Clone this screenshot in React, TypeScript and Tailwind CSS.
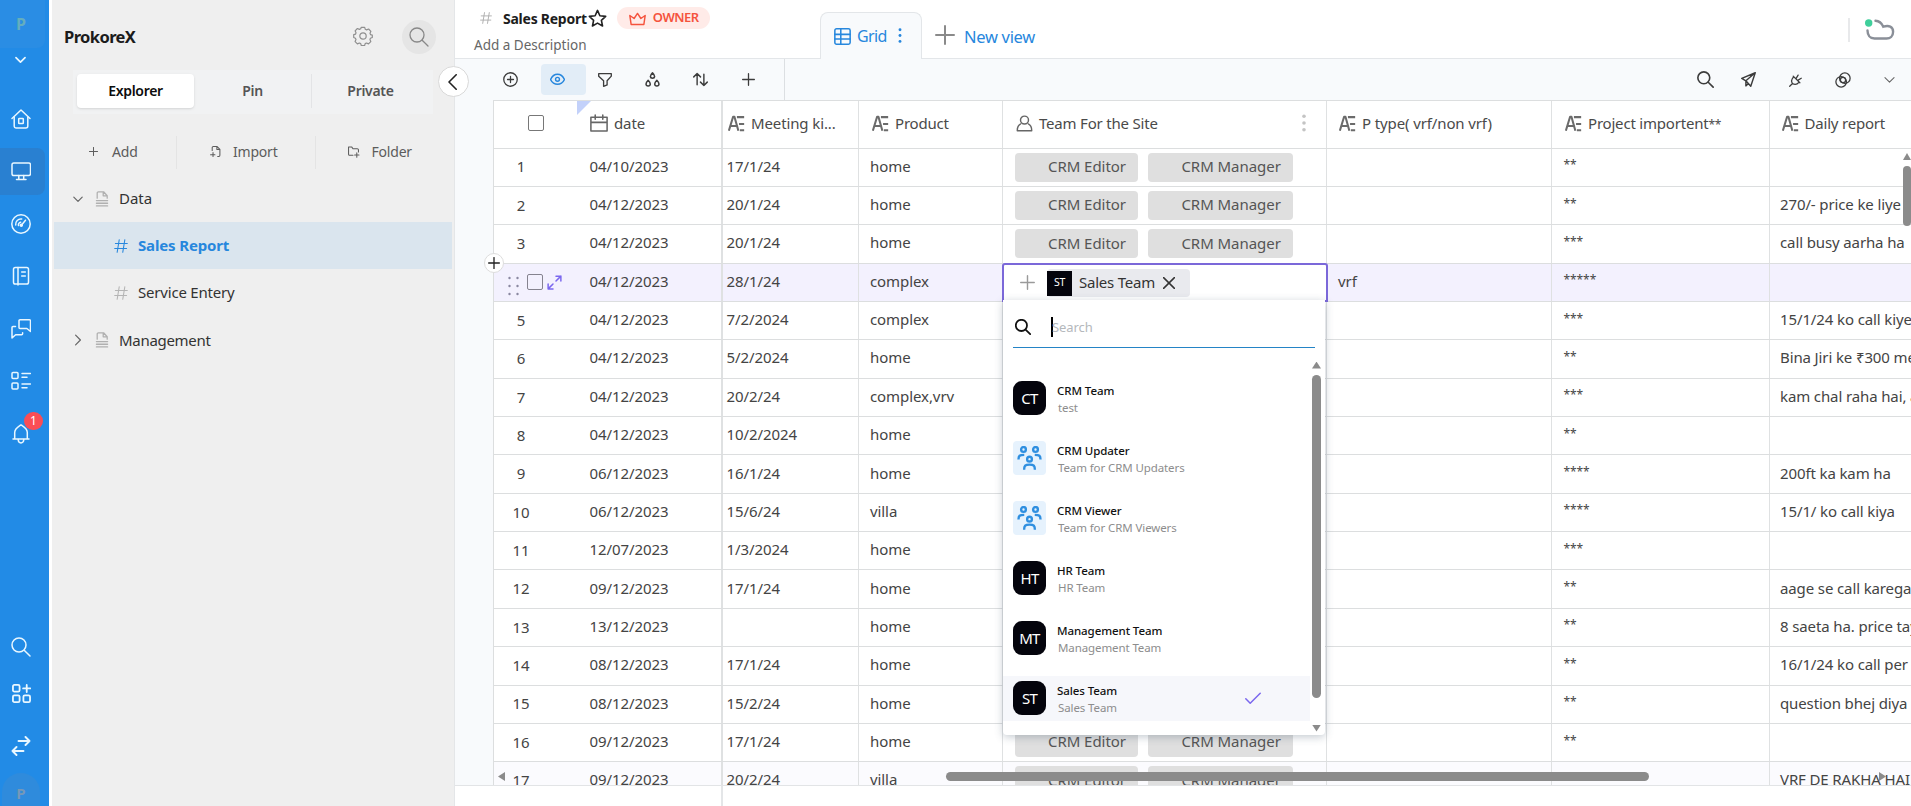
import { useState, type ReactNode } from "react";
import clsx from "clsx";

type IconProps = {
  size?: number;
  stroke?: number;
  className?: string;
  children: ReactNode;
};

// All line icons share a 20x20 view box
function Icon({ size = 20, stroke = 1.5, className, children }: IconProps) {
  return (
    <svg
      width={size}
      height={size}
      viewBox="0 0 20 20"
      fill="none"
      stroke="currentColor"
      strokeWidth={stroke}
      strokeLinecap="round"
      strokeLinejoin="round"
      className={clsx("shrink-0", className)}
    >
      {children}
    </svg>
  );
}

const searchPath = (
  <>
    <circle cx="8" cy="8" r="7" />
    <path d="M13.2 13.2 19 19" />
  </>
);
const chevronDown = <path d="m3 7 7 7 7-7" />;
const plusPath = <path d="M10 1v18M1 10h18" />;

const railItems: { id: string; icon: ReactNode; active?: boolean; badge?: number }[] = [
  {
    id: "home",
    icon: (
      <>
        <path d="M1 9.500 10 1l9 8.500" />
        <path d="M3.200 8v9a2 2 0 0 0 2 2h9.600a2 2 0 0 0 2-2V8" />
        <rect x="7.700" y="9.500" width="4.600" height="5" rx=".6" />
      </>
    ),
  },
  {
    id: "workspace",
    active: true,
    icon: (
      <>
        <rect x="1" y="2" width="18.500" height="12.500" rx="1.800" />
        <path d="M7.800 14.500v3.500M12.700 14.500v3.500M5.500 18.500h9.500" />
      </>
    ),
  },
  {
    id: "dashboard",
    icon: (
      <>
        <circle cx="10" cy="10" r="9.200" />
        <path d="M4.700 11a5.300 5.300 0 0 1 6-6" />
        <path d="M7.500 11.500a2.600 2.600 0 0 1 2.200-3.300M11 10.500 14.500 6.200" />
        <circle cx="10.300" cy="11.300" r="1" fill="currentColor" />
      </>
    ),
  },
  {
    id: "notebook",
    icon: (
      <>
        <rect x="2.500" y="1.500" width="15" height="16.500" rx="1.800" />
        <path d="M7 1.500V19M10.700 6h3.600M10.700 10h3.600" />
      </>
    ),
  },
  {
    id: "chat",
    icon: (
      <>
        <path d="M8 5.500V1.800A1 1 0 0 1 9 .8h9.500a1 1 0 0 1 1 1V12.500l-3.600-3H9a1 1 0 0 1-1-1z" />
        <path d="M4.500 7.500H2a1 1 0 0 0-1 1V19l3.600-3.200h6a1 1 0 0 0 1-1v-1" />
      </>
    ),
  },
  {
    id: "forms",
    icon: (
      <>
        <rect x="1" y="1.500" width="6" height="6" rx="1" />
        <rect x="1" y="12" width="6" height="6" rx="1" />
        <path d="M11 2.500h8.500M11 6.300h5M11 13h8.500M11 16.800h5" />
      </>
    ),
  },
  {
    id: "alerts",
    badge: 1,
    icon: (
      <>
        <path d="M2 15h16M3.700 15V8.500C3.700 4.500 7.500 2.500 10 .8c2.500 1.700 6.300 3.700 6.300 7.700V15" />
        <path d="M7.200 15.500c0 4.500 5.600 4.500 5.600 0" />
      </>
    ),
  },
];

function Rail() {
  return (
    <nav className="flex w-[49px] shrink-0 flex-col bg-[#228be6] text-[#e9f7ff]">
      <div className="flex h-12 w-[45px] items-center justify-center rounded-br-lg bg-[#2a8de4] pr-[3px] text-[16px] font-bold text-[#64aebd]">
        P
      </div>
      <div className="flex h-[45px] w-[41px] justify-center pt-[5px]">
        <Icon size={13} stroke={2.6}>{chevronDown}</Icon>
      </div>
      {railItems.map((item) => (
        <div key={item.id} className="flex h-[52.500px] w-[45px] shrink-0 items-center pb-px">
          <div
            className={clsx(
              "relative flex h-[47px] w-[45px] items-center justify-center rounded-r-lg pr-[3px]",
              item.active && "bg-[#2980d1]"
            )}
          >
            <Icon>{item.icon}</Icon>
            {item.badge && (
              <span className="absolute left-[24px] top-[2px] flex h-[18px] w-[19px] items-center justify-center rounded-full bg-[#fa4d56] text-[12px] leading-none text-white">
                {item.badge}
              </span>
            )}
          </div>
        </div>
      ))}
      <div className="mt-auto flex w-[42px] flex-col items-center">
        <Icon>{searchPath}</Icon>
        <Icon className="mt-[27px]" size={19} stroke={1.900}>
          <rect x="1" y="1" width="7" height="7" rx="1.500" />
          <rect x="1" y="12" width="7" height="7" rx="1.500" />
          <rect x="12" y="12" width="7" height="7" rx="1.500" />
          <path d="M15.500 1v7.500M11.700 4.700h7.600" />
        </Icon>
        <Icon className="mt-[33px]" size={20} stroke={1.900}>
          <path d="M7.500 5H18.500M14.500 1l4 4-4 4M12.500 15H1.500M5.500 11l-4 4 4 4" />
        </Icon>
        <div className="mt-[17px] flex h-[33px] w-[38px] items-center justify-center rounded-t-full bg-[#2f8bdc] pt-[8px] text-[15px] font-bold text-[#7498b8]">
          P
        </div>
      </div>
    </nav>
  );
}

const docIcon = (
  <Icon size={16} stroke={1.600} className="text-[#b0b0b0]">
    <path d="M4 9V2.500A1.500 1.500 0 0 1 5.500 1H12l4.500 5v3M11.500 1.500V6h4.500M3 12h14M3 15.300h14M3 18.600h14" />
  </Icon>
);

function HashMark({ className }: { className?: string }) {
  return (
    <Icon size={14} stroke={1.500} className={className}>
      <path d="M7.500 1 4.500 19M15.500 1l-3 18M2 6.500h17M1 13.500h17" />
    </Icon>
  );
}

function Sidebar() {
  const [tab, setTab] = useState("Explorer");

  return (
    <aside className="ml-[3px] flex w-[403px] shrink-0 flex-col border-r border-[#e4e6e8] bg-[#efefef]">
      <div className="flex h-[70px] items-center pl-3 pr-[18px] pt-[4px]">
        <h1 className="text-[16.500px] font-bold tracking-[-0.600px] text-[#1b1b1b]">ProkoreX</h1>
        <Icon size={20} stroke={1.200} className="-mt-[2px] ml-auto text-[#8f8f8f]">
          <circle cx="10" cy="10" r="3.200" />
          <path d="M8.300 1.300h3.400l.6 2 1.300.6 2-.9 2.300 2.300-.9 2 .6 1.400 1.700.5v2.300l-1.900.8-.5 1.300.9 2-2.300 2.300-2-.9-1.300.6-.6 1.900H8.300l-.6-1.900-1.300-.6-2 .9-2.300-2.300.9-2-.6-1.300-1.700-.8V8.700l1.800-.5.500-1.400-.9-2 2.300-2.300 2 .9 1.300-.6z" />
        </Icon>
        <div className="ml-[29px] flex size-[34px] items-center justify-center rounded-full bg-[#e5e5e5]">
          <Icon size={20} stroke={1.300} className="text-[#888]">{searchPath}</Icon>
        </div>
      </div>

      <div className="ml-[21px] mr-[21px] flex h-[44px] bg-[#f1f2f3] p-[4px] pb-[6px] text-[14px] font-semibold text-[#555]">
        {["Explorer", "Pin", "Private"].map((name) => (
          <button
            key={name}
            onClick={() => setTab(name)}
            className={clsx(
              "h-[34px] flex-1 rounded pb-px tracking-[-0.300px]",
              tab === name && "bg-white text-[#0c0c0c] shadow-sm",
              name === "Private" && "rounded-none border-l border-[#e3e4e6]"
            )}
          >
            {name}
          </button>
        ))}
      </div>

      <div className="mt-[22px] flex h-[33px] items-center text-[14px] tracking-[-0.200px] text-[#5c5c5c]">
        <div className="flex h-full w-[125px] items-center border-r border-[#e4e4e4] pb-[3px] pl-[37px]">
          <Icon size={9} stroke={2.200}>{plusPath}</Icon>
          <span className="ml-[14px]">Add</span>
        </div>
        <div className="flex h-full w-[139px] items-center border-r border-[#e4e4e4] pb-[3px] pl-[33px]">
          <Icon size={11} stroke={1.900}>
            <path d="M4 8V3a2 2 0 0 1 2-2h7l5 5v11a2 2 0 0 1-2 2h-2M12.500 1v5.500H18M1 16h8M5.500 12v7" />
          </Icon>
          <span className="ml-[12px]">Import</span>
        </div>
        <div className="flex h-full items-center pb-[3px] pl-[32px]">
          <Icon size={11} stroke={1.900} className="overflow-visible">
            <path d="M9 17H3a2 2 0 0 1-2-2V2h6l2 3h8a2 2 0 0 1 2 2v4M12 16.500h8M16 12.500v8" />
          </Icon>
          <span className="ml-[12.500px]">Folder</span>
        </div>
      </div>

      <div className="mt-[6px] text-[15px] text-[#333]">
        <div className="flex h-[47px] items-center pl-[20px]">
          <Icon size={12} stroke={2} className="text-[#666]">{chevronDown}</Icon>
          <span className="ml-[10px]">{docIcon}</span>
          <span className="ml-[9px]">Data</span>
        </div>
        <div className="ml-[2px] mr-[2px] flex h-[47px] items-center bg-[#dae5ee] pl-[60px] font-bold text-[#2787dd]">
          <HashMark />
          <span className="ml-[10px] tracking-[-0.150px]">Sales Report</span>
        </div>
        <div className="ml-[2px] flex h-[47px] items-center pl-[60px]">
          <HashMark className="text-[#b5b5b5]" />
          <span className="ml-[10px] tracking-[-0.200px]">Service Entery</span>
        </div>
        <div className="flex h-[48px] items-center pl-[20px]">
          <Icon size={12} stroke={2} className="text-[#666]"><path d="m6 2 8 8-8 8" /></Icon>
          <span className="ml-[10px]">{docIcon}</span>
          <span className="ml-[9px] tracking-[-0.300px]">Management</span>
        </div>
      </div>
    </aside>
  );
}

function ViewHeader() {
  return (
    <header className="flex h-[59px] shrink-0 border-b border-[#e3e6e9] bg-white">
      <div className="flex w-[365px] shrink-0 flex-col pl-[19px] pt-[7px]">
        <div className="flex h-[22px] items-center pl-[6px]">
          <HashMark className="size-[12px] text-[#aaa]" />
          <span className="ml-[11px] text-[14px] font-bold tracking-[-0.250px] text-[#1d1d1d]">Sales Report</span>
          <Icon size={19} stroke={1.700} className="ml-px text-[#222]">
            <path d="m10 1.500 2.500 5.600 6.100.7-4.500 4.100 1.200 6L10 14.900l-5.300 3 1.200-6L1.400 7.800l6.100-.7z" />
          </Icon>
          <span className="ml-[10px] flex h-[22px] w-[93px] items-center rounded-full bg-[#ffebe8] pl-[12px] text-[13px] font-semibold tracking-[-0.500px] text-[#f5533d]">
            <Icon size={17} stroke={1.700} className="mr-[7px]">
              <path d="M2.500 17 1 6.500l5 3.500L10 4l4 6 5-3.500L17.500 17z" />
            </Icon>
            OWNER
          </span>
        </div>
        <span className="mt-[6px] text-[13.500px] leading-[20px] text-[#666]">Add a Description</span>
      </div>
      <div className="mt-[12px] flex h-[47px] w-[102px] shrink-0 items-center rounded-t-lg border border-b-0 border-[#e3e6e9] bg-[#f8fafc] pl-[13px] text-[16px] text-[#2787dd]">
        <Icon size={17} stroke={1.800}>
          <rect x="1" y="1" width="18" height="18" rx="2" />
          <path d="M8 1v18M1 7.500h18M1 13h18" />
        </Icon>
        <span className="ml-[6px] tracking-[-0.600px]">Grid</span>
        <Icon size={18} className="ml-[4px]">
          <g fill="currentColor" stroke="none">
            <circle cx="10" cy="3" r="1.600" />
            <circle cx="10" cy="9.500" r="1.600" />
            <circle cx="10" cy="16" r="1.600" />
          </g>
        </Icon>
      </div>
      <div className="ml-[13px] flex items-center pt-[12px] text-[16.500px] text-[#2787dd]">
        <Icon size={20} stroke={2} className="text-[#8a8a8a]">{plusPath}</Icon>
        <span className="ml-[9px] mt-[4px] tracking-[-0.300px]">New view</span>
      </div>
      <div className="ml-auto mr-[16px] mt-[18px] flex h-6 items-center border-l-2 border-[#e8e9eb] pl-[14px]">
        <svg width="31" height="24" viewBox="0 0 31 24" fill="none" strokeWidth="2.400" strokeLinecap="round">
          <circle cx="4.700" cy="5" r="3.700" fill="#3fcf9b" />
          <path
            d="M11.500 2.700c4 .2 6.300 2.600 7.800 6 5.500-1.800 9.800 0 9.800 5 0 4.500-3 6.800-6.500 6.800H10.500c-4.500 0-7-3.500-7-8"
            stroke="#8a8f98"
          />
        </svg>
      </div>
    </header>
  );
}

function Toolbar() {
  return (
    <div className="flex h-[41px] shrink-0 items-center bg-[#f8fafc] text-[#3c3c3c]">
      <div className="flex h-full w-[330px] items-center border-r border-[#dcdfe2] pl-[48px]">
        <Icon size={15} stroke={1.700}>
          <circle cx="10" cy="10" r="9" />
          <path d="M10 6v8M6 10h8" />
        </Icon>
        <span className="ml-[23px] flex h-[31px] w-[45px] items-center rounded bg-[#e2edf7] pl-[9px] text-[#2787dd]">
          <Icon size={15} stroke={1.900}>
            <path d="M.8 10C5 .8 15 .8 19.200 10 15 18.500 5 18.500 .8 10z" />
            <circle cx="10" cy="9.800" r="2.600" />
          </Icon>
        </span>
        <Icon size={14} stroke={1.900} className="ml-[12px]">
          <path d="M1 1h18v3.500L13 11v6l-5 2v-8L1 4.500z" />
        </Icon>
        <Icon size={15} stroke={2} className="ml-[33px]">
          <path d="M10 1.200c4 4 3.500 7 0 7s-4-3 0-7zM4.200 11c4 4 3.500 7.500 0 7.500s-4-3.500 0-7.500zM15.800 11c4 4 3.500 7.500 0 7.500s-4-3.500 0-7.500z" />
        </Icon>
        <Icon size={15} stroke={1.900} className="ml-[33px]">
          <path d="M5.500 17V2M1 6.500 5.500 2 10 6.500M14.500 3v15M10 13.500l4.500 4.500 4.500-4.500" />
        </Icon>
        <Icon size={13} stroke={2} className="ml-[34px]">{plusPath}</Icon>
      </div>
      <div className="ml-auto flex items-center pr-[15px]">
        <Icon size={17} stroke={1.900}>{searchPath}</Icon>
        <Icon size={15} stroke={1.900} className="ml-[27px]">
          <path d="M19 1 1 8.500l5.500 3.200L13 19zM19 1 6.500 11.700v6.800l3-3" />
        </Icon>
        <Icon size={14} stroke={1.800} className="ml-[33px]">
          <path d="M1 19l4-4M5 15C2.500 11.500 4 8 7 5.500l7.500 7.500C12 16 8.500 17.500 5 15zM6 4.500l9.500 9.500M10 8l3-5M12.500 10.500l5-3" />
        </Icon>
        <Icon size={16} stroke={1.600} className="ml-[32px]">
          <circle cx="12.300" cy="7.700" r="6.600" />
          <circle cx="7.700" cy="12.300" r="6.600" />
          <circle cx="10" cy="10" r="3.300" />
        </Icon>
        <Icon size={13} stroke={1.600} className="ml-[32px] text-[#666]">{chevronDown}</Icon>
      </div>
    </div>
  );
}

function TextFieldIcon() {
  return (
    <Icon size={17} stroke={2.400} className="text-[#6b6b6b]">
      <path d="M1 18.500 6 2h1.600l4.600 16.500M3 13h7.500M10.500 2.500H19M13 10.500h6M14 18h5" strokeLinecap="butt" />
    </Icon>
  );
}

type Row = {
  id: number;
  date: string;
  meeting: string;
  product: string;
  teams?: string[];
  type?: string;
  stars: string;
  report: string;
};

const crm = ["CRM Editor", "CRM Manager"];

const rows: Row[] = [
  { id: 1, date: "04/10/2023", meeting: "17/1/24", product: "home", teams: crm, stars: "**", report: "" },
  { id: 2, date: "04/12/2023", meeting: "20/1/24", product: "home", teams: crm, stars: "**", report: "270/- price ke liye" },
  { id: 3, date: "04/12/2023", meeting: "20/1/24", product: "home", teams: crm, stars: "***", report: "call busy aarha ha" },
  { id: 4, date: "04/12/2023", meeting: "28/1/24", product: "complex", type: "vrf", stars: "*****", report: "" },
  { id: 5, date: "04/12/2023", meeting: "7/2/2024", product: "complex", stars: "***", report: "15/1/24 ko call kiye" },
  { id: 6, date: "04/12/2023", meeting: "5/2/2024", product: "home", stars: "**", report: "Bina Jiri ke ₹300 me" },
  { id: 7, date: "04/12/2023", meeting: "20/2/24", product: "complex,vrv", stars: "***", report: "kam chal raha hai, a" },
  { id: 8, date: "04/12/2023", meeting: "10/2/2024", product: "home", stars: "**", report: "" },
  { id: 9, date: "06/12/2023", meeting: "16/1/24", product: "home", stars: "****", report: "200ft ka kam ha" },
  { id: 10, date: "06/12/2023", meeting: "15/6/24", product: "villa", stars: "****", report: "15/1/ ko call kiya" },
  { id: 11, date: "12/07/2023", meeting: "1/3/2024", product: "home", stars: "***", report: "" },
  { id: 12, date: "09/12/2023", meeting: "17/1/24", product: "home", stars: "**", report: "aage se call karega" },
  { id: 13, date: "13/12/2023", meeting: "", product: "home", stars: "**", report: "8 saeta ha. price tay" },
  { id: 14, date: "08/12/2023", meeting: "17/1/24", product: "home", stars: "**", report: "16/1/24 ko call per" },
  { id: 15, date: "08/12/2023", meeting: "15/2/24", product: "home", stars: "**", report: "question bhej diya" },
  { id: 16, date: "09/12/2023", meeting: "17/1/24", product: "home", teams: crm, stars: "**", report: "" },
  { id: 17, date: "09/12/2023", meeting: "20/2/24", product: "villa", teams: crm, stars: "", report: "VRF DE RAKHA HAI" },
];

const columns = "grid grid-cols-[229px_136px_144px_324px_225px_217.500px_1fr]";
const cell = "flex items-center border-r border-[#dfe1e2] whitespace-nowrap min-w-0";

function HeaderRow() {
  return (
    <div className={clsx(columns, "h-[47.500px] shrink-0 border-b border-[#dcdedf] text-[15px] tracking-[-0.120px] text-[#4a4a4a]")}>
      <div className={clsx(cell, "relative border-r-2 pb-[2px] pl-[34px]")}>
        <span className="absolute left-[83px] top-0 size-[14px] bg-[#c3d1fa] [clip-path:polygon(0_0,100%_0,0_100%)]" />
        <span className="size-[16px] rounded-[2px] border-[1.500px] border-[#777]" />
        <Icon size={18} stroke={1.700} className="ml-[46px] text-[#666]">
          <path d="M1 3.500h18v15.500H1zM1 9.300h18M5.800 1v4.800M14.200 1v4.800" />
        </Icon>
        <span className="ml-[6px]">date</span>
      </div>
      <div className={clsx(cell, "pb-[2px] pl-[5px]")}>
        <TextFieldIcon />
        <span className="ml-[6px]">Meeting ki...</span>
      </div>
      <div className={clsx(cell, "pb-[2px] pl-[13px]")}>
        <TextFieldIcon />
        <span className="ml-[6px] tracking-[-0.200px]">Product</span>
      </div>
      <div className={clsx(cell, "pb-[2px] pl-[13px]")}>
        <Icon size={17} stroke={1.700} className="text-[#666]">
          <circle cx="10" cy="6" r="4.700" />
          <path d="M5.500 10.500c-3 1.500-4 4-4 8h17c0-4-1-6.500-4-8" />
        </Icon>
        <span className="ml-[6px] tracking-[-0.200px]">Team For the Site</span>
        <Icon size={18} className="ml-auto mr-[13px] text-[#c4c4c4]">
          <g fill="currentColor" stroke="none">
            <circle cx="10" cy="2.500" r="2" />
            <circle cx="10" cy="10" r="2" />
            <circle cx="10" cy="17.500" r="2" />
          </g>
        </Icon>
      </div>
      <div className={clsx(cell, "pb-[2px] pl-[12px]")}>
        <TextFieldIcon />
        <span className="ml-[6px]">P type( vrf/non vrf)</span>
      </div>
      <div className={clsx(cell, "pb-[2px] pl-[13px]")}>
        <TextFieldIcon />
        <span className="ml-[6px] tracking-[-0.200px]">
          Project importent<span className="text-[12px]">**</span>
        </span>
      </div>
      <div className="flex items-center whitespace-nowrap pb-[2px] pl-[12px]">
        <TextFieldIcon />
        <span className="ml-[6px] tracking-[-0.200px]">Daily report</span>
      </div>
    </div>
  );
}

const teams = [
  { initials: "CT", name: "CRM Team", info: "test" },
  { name: "CRM Updater", info: "Team for CRM Updaters" },
  { name: "CRM Viewer", info: "Team for CRM Viewers" },
  { initials: "HT", name: "HR Team", info: "HR Team" },
  { initials: "MT", name: "Management Team", info: "Management Team" },
  { initials: "ST", name: "Sales Team", info: "Sales Team" },
];

function TeamPicker() {
  const selected = "Sales Team";

  return (
    <div className="absolute left-0 top-[36px] z-20 h-[435px] w-[322px] rounded-b bg-white shadow-[0_2px_8px_rgba(60,80,100,0.300)]">
      <div className="ml-[10px] mr-[10px] flex h-[48px] items-center border-b border-[#2484c6] pt-[7px]">
        <Icon size={16} stroke={2.200} className="ml-[2px] text-[#111]">{searchPath}</Icon>
        <span className="ml-[20px] h-5 w-[2px] bg-black" />
        <span className="-ml-px mt-[3px] text-[13px] text-[#b4b8bc]">Search</span>
      </div>
      <div className="flex">
        <ul className="mt-[28px] w-[307px]">
          {teams.map((team) => (
            <li
              key={team.name}
              className={clsx(
                "mb-[15px] flex h-[45px] items-center pl-[10px]",
                team.name === selected && "bg-[#f6f7fb]"
              )}
            >
              {team.initials ? (
                <span className="flex h-[34px] w-[33px] shrink-0 items-center justify-center rounded-[9px] bg-[#04040c] text-[15px] tracking-[-0.700px] text-white">
                  {team.initials}
                </span>
              ) : (
                <span className="flex h-[34px] w-[33px] shrink-0 items-center justify-center rounded bg-[#e6f2fd] text-[#2f8fe0]">
                  <Icon size={25} stroke={1.900}>
                    <circle cx="5.200" cy="2.800" r="1.900" />
                    <circle cx="14.800" cy="2.800" r="1.900" />
                    <circle cx="10" cy="10.500" r="1.900" />
                    <path
                      d="M1.200 10.800c0-3 .8-3.700 4.600-3.700M18.800 10.800c0-3-.8-3.700-4.600-3.700M5.700 19c0-3.200.8-4.100 4.300-4.100s4.300.9 4.300 4.100"
                      strokeLinecap="butt"
                    />
                  </Icon>
                </span>
              )}
              <div className="ml-[11px] mt-[2px] flex flex-col">
                <span className="text-[11.500px] font-medium leading-[17px] tracking-[-0.080px] text-[#111]">{team.name}</span>
                <span className="ml-px text-[11.500px] leading-[17px] tracking-[-0.100px] text-[#8d8d8d]">{team.info}</span>
              </div>
              {team.name === selected && (
                <Icon size={16} stroke={1.900} className="ml-auto mr-[49px] text-[#7b68ee]">
                  <path d="m1 11 5.500 5.500L19 4" />
                </Icon>
              )}
            </li>
          ))}
        </ul>
        <div className="ml-[2px] mt-[14px] flex flex-col items-center">
          <span className="h-[7px] w-[9px] bg-[#8b8b8b] [clip-path:polygon(50%_0,100%_100%,0_100%)]" />
          <span className="mt-[6px] h-[323px] w-[9px] rounded-full bg-[#8b8b8b]" />
          <span className="mt-[27px] h-[7px] w-[9px] bg-[#8b8b8b] [clip-path:polygon(0_0,100%_0,50%_100%)]" />
        </div>
      </div>
    </div>
  );
}

function TeamCell({ teams = [] }: { teams?: string[] }) {
  return (
    <div className={clsx(cell, "gap-[10px] pl-[11.500px] text-[#555]")}>
      {teams.map((team) => (
        <span key={team} className="flex h-[29px] items-center rounded bg-[#dfdfdf] pb-[2px] pl-[33.500px] pr-[12px] tracking-[-0.050px]">
          {team}
        </span>
      ))}
    </div>
  );
}

function TeamEditor() {
  return (
    <div className="relative">
      <div className="absolute -left-[1px] -top-[1px] z-10 flex h-[39px] w-[326px] items-center rounded-t-[3px] border-2 border-[#7b68d9] bg-white pl-[16px]">
        <Icon size={15} stroke={1.900} className="text-[#9a9a9a]">{plusPath}</Icon>
        <span className="ml-[12px] mt-[2px] flex h-[28px] w-[143px] items-center rounded bg-[#e9eaee] text-[#333]">
          <span className="flex size-[25px] items-center justify-center bg-[#04040c] text-[10.500px] tracking-[-0.300px] text-white">ST</span>
          <span className="ml-[7px] pb-[2px] tracking-[-0.220px]">Sales Team</span>
          <Icon size={12} stroke={2.500} className="ml-[8px]"><path d="M1 1l18 18M19 1 1 19" /></Icon>
        </span>
      </div>
      <TeamPicker />
    </div>
  );
}

function GridRow({ row }: { row: Row }) {
  const active = row.id === 4;
  return (
    <div
      className={clsx(
        columns,
        "h-[38.370px] shrink-0 border-b border-[#dcdedf] text-[15px] tracking-[-0.080px] text-[#444]",
        active && "relative z-10 bg-[#f3f1fe]",
        row.id === 17 && "bg-[#fbfbfe]"
      )}
    >
      <div className={clsx(cell, "relative border-r-2")}>
        {active ? (
          <div className="flex w-[95.500px] items-center pl-[13px]">
            <span className="absolute -left-[10px] -top-[11px] flex size-[20px] items-center justify-center rounded-full border border-[#ddd] bg-white">
              <Icon size={12} stroke={2.200} className="text-[#222]">{plusPath}</Icon>
            </span>
            <Icon size={20} className="mt-2 text-[#8a88a0]">
              <g fill="currentColor" stroke="none">
                <circle cx="2.500" cy="2" r="1.200" />
                <circle cx="10.500" cy="2" r="1.200" />
                <circle cx="2.500" cy="10" r="1.200" />
                <circle cx="10.500" cy="10" r="1.200" />
                <circle cx="2.500" cy="18" r="1.200" />
                <circle cx="10.500" cy="18" r="1.200" />
              </g>
            </Icon>
            <span className="size-[16px] shrink-0 rounded-[2px] border-[1.500px] border-[#85838f]" />
            <Icon size={15} stroke={2} className="ml-[4px] text-[#7b68ee]">
              <path d="M12 1.500h6.500V8M18.500 1.500 12 8M1.500 12v6.500H8M1.500 18.500 8 12" />
            </Icon>
          </div>
        ) : (
          <span className="mr-[41.500px] w-[54px] pb-[1px] text-center">{row.id}</span>
        )}
        <span className="pb-[2.500px]">{row.date}</span>
      </div>
      <div className={clsx(cell, "pb-[2.500px] pl-[3.500px]")}>{row.meeting}</div>
      <div className={clsx(cell, "pb-[2.500px] pl-[11px]")}>{row.product}</div>
      {active ? <TeamEditor /> : <TeamCell teams={row.teams} />}
      <div className={clsx(cell, "pb-[2.500px] pl-[11px]")}>{row.type}</div>
      <div className={clsx(cell, "pb-[4px] pl-[11.500px] text-[12px]")}>{row.stars}</div>
      <div className="flex min-w-0 items-center overflow-hidden whitespace-nowrap pb-[2.500px] pl-[10.500px] tracking-[-0.120px]">
        {row.report}
      </div>
    </div>
  );
}

function DataGrid() {
  return (
    <div className="relative flex h-[686px] shrink-0 overflow-hidden border-b border-[#e2e4e6]">
      <div className="w-[38px] shrink-0 bg-[#f8fafc]" />
      <div className="flex min-w-0 flex-1 flex-col border-l border-t border-[#dcdedf] bg-white">
        <HeaderRow />
        {rows.map((row) => (
          <GridRow key={row.id} row={row} />
        ))}
      </div>

      {/* Overlay scrollbars */}
      <span className="absolute bottom-[4px] left-[43px] h-[9px] w-[7px] bg-[#8b8b8b] [clip-path:polygon(100%_0,100%_100%,0_50%)]" />
      <span className="absolute bottom-[4px] left-[491px] h-[9px] w-[703px] rounded-full bg-[#8b8b8b]" />
      <span className="absolute bottom-[4px] right-[25px] h-[9px] w-[7px] bg-[#8b8b8b] [clip-path:polygon(0_0,100%_50%,0_100%)]" />
      <span className="absolute right-0 top-[53px] h-[7px] w-[8px] bg-[#8b8b8b] [clip-path:polygon(50%_0,100%_100%,0_100%)]" />
      <span className="absolute right-0 top-[66px] h-[60px] w-[8px] rounded bg-[#8b8b8b]" />
    </div>
  );
}

export default function App() {
  return (
    <div className="flex h-[806px] w-[1911px] overflow-hidden bg-white font-['Noto_Sans','Open_Sans',sans-serif]">
      <Rail />
      <Sidebar />
      <main className="relative flex min-w-0 flex-1 flex-col">
        <ViewHeader />
        <Toolbar />
        <DataGrid />
        <div className="ml-[39px] w-[229px] flex-1 border-r-2 border-[#e4e6e8]" />
        <button className="absolute -left-[17px] top-[66px] z-30 flex size-[31px] items-center justify-center rounded-full border border-[#d9d9d9] bg-white pr-[2px]">
          <Icon size={16} stroke={2} className="text-[#222]"><path d="m14 1-9 9 9 9" /></Icon>
        </button>
      </main>
    </div>
  );
}
